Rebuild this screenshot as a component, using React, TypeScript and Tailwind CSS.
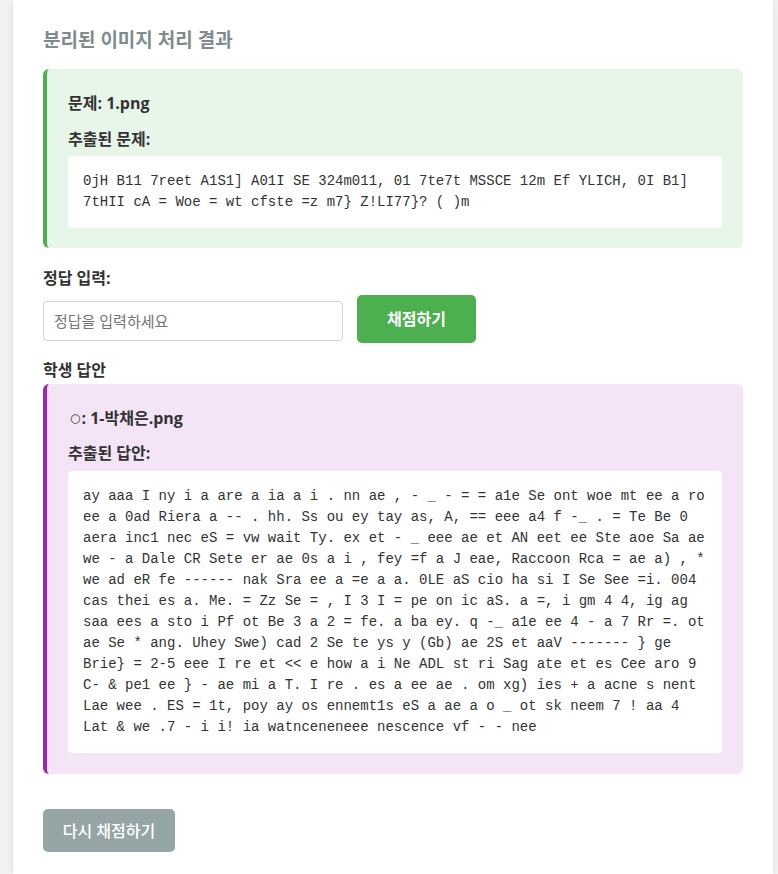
import React from "react";

const problemText =
  "0jH B11 7reet A1S1] A01I SE 324m011, 01 7te7t MSSCE 12m Ef YLICH, 0I B1] 7tHII cA = Woe = wt cfste =z m7} Z!LI77}? ( )m";

const answerLines = [
  "ay aaa I ny i a are a ia a i . nn ae , - _ - = = a1e Se ont woe mt ee a ro",
  "ee a 0ad Riera a -- . hh. Ss ou ey tay as, A, == eee a4 f -_ . = Te Be 0",
  "aera inc1 nec eS = vw wait Ty. ex et - _ eee ae et AN eet ee Ste aoe Sa ae",
  "we - a Dale CR Sete er ae 0s a i , fey =f a J eae, Raccoon Rca = ae a) , *",
  "we ad eR fe ------ nak Sra ee a =e a a. 0LE aS cio ha si I Se See =i. 004",
  "cas thei es a. Me. = Zz Se = , I 3 I = pe on ic aS. a =, i gm 4 4, ig ag",
  "saa ees a sto i Pf ot Be 3 a 2 = fe. a ba ey. q -_ a1e ee 4 - a 7 Rr =. ot",
  "ae Se * ang. Uhey Swe) cad 2 Se te ys y (Gb) ae 2S et aaV ------- } ge",
  "Brie} = 2-5 eee I re et << e how a i Ne ADL st ri Sag ate et es Cee aro 9",
  "C- & pe1 ee } - ae mi a T. I re . es a ee ae . om xg) ies + a acne s nent",
  "Lae wee . ES = 1t, poy ay os ennemt1s eS a ae a o _ ot sk neem 7 ! aa 4",
  "Lat & we .7 - i i! ia watnceneneee nescence vf - - nee",
];

export default function App() {
  return (
    <div className="min-h-screen w-full bg-[#f2f2f2] pl-[13px] font-['Open_Sans','Noto_Sans_CJK_KR',sans-serif] text-[#333]">
      <div className="flex min-h-screen w-[760px] flex-col bg-white px-[30px] pb-[22px] pt-[26px] shadow-[0_0_8px_rgba(0,0,0,0.08)]">
        <h2 className="text-[19px] font-bold leading-[28px] text-[#7f8c8d]">
          분리된 이미지 처리 결과
        </h2>

        <div className="mt-[15px] flex flex-col rounded-[6px] border-l-4 border-[#4caf50] bg-[#e8f5e9] pb-[20px] pl-[21px] pr-[21px] pt-[22px]">
          <div className="text-[16px] font-bold leading-[24px]">문제: 1.png</div>
          <div className="mt-[12px] text-[16px] font-bold leading-[24px]">추출된 문제:</div>
          <div className="mt-[5px] rounded-[4px] bg-white p-[15px] font-['Liberation_Mono',monospace] text-[14px] leading-[21px] text-[#333] whitespace-pre-wrap">
            {problemText}
          </div>
        </div>

        <div className="mt-[18px] text-[16px] font-bold leading-[24px]">정답 입력:</div>
        <div className="mt-[5px] flex items-start gap-[14px]">
          <input
            type="text"
            placeholder="정답을 입력하세요"
            className="mt-[6px] h-[40px] w-[300px] rounded-[4px] border border-[#cfd4da] bg-white px-[10px] text-[15px] text-[#333] outline-none placeholder:text-[#757575]"
          />
          <button className="h-[48px] w-[119px] rounded-[5px] bg-[#4caf50] text-[16px] font-bold text-white">
            채점하기
          </button>
        </div>

        <div className="mt-[15px] text-[16px] font-bold leading-[24px]">학생 답안</div>
        <div className="mt-[2px] flex flex-col rounded-[6px] border-l-4 border-[#9c27b0] bg-[#f3e5f5] pb-[21px] pl-[21px] pr-[21px] pt-[22px]">
          <div className="flex items-center text-[16px] font-bold leading-[24px]">
            <span className="ml-[2px] mr-[1px] font-['DejaVu_Sans',sans-serif] text-[12px] font-normal leading-[24px]">○</span>
            <span>: 1-박채은.png</span>
          </div>
          <div className="mt-[11px] text-[16px] font-bold leading-[24px]">추출된 답안:</div>
          <div className="mt-[6px] rounded-[4px] bg-white p-[15px] font-['Liberation_Mono',monospace] text-[14px] leading-[21px] text-[#333] whitespace-pre">
            {answerLines.join("\n")}
          </div>
        </div>

        <div className="mt-[35px]">
          <button className="h-[43px] w-[132px] rounded-[5px] bg-[#95a5a6] text-[16px] font-medium text-white">
            다시 채점하기
          </button>
        </div>
      </div>
    </div>
  );
}
